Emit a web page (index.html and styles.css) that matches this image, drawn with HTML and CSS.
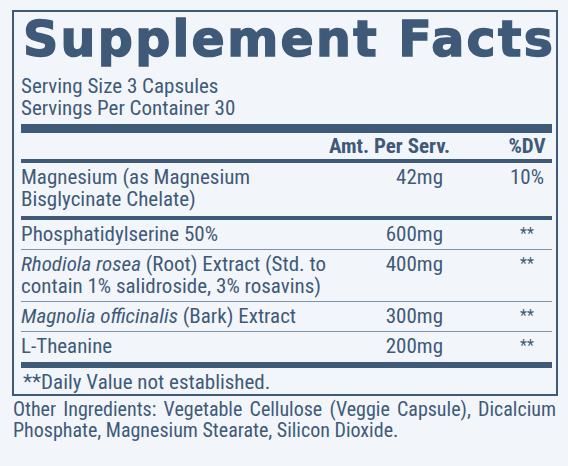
FILE: index.html
```html
<!DOCTYPE html>
<html>
<head>
    <title>Supplement Facts</title>
    <link rel="stylesheet" href="styles.css">
</head>
<body>
    <div class="label">
        <h1 class="title">Supplement Facts</h1>
        <div class="serving">
            <p>Serving Size 3 Capsules</p>
            <p>Servings Per Container 30</p>
        </div>
        <div class="bar-thick"></div>
        <div class="row head">
            <span class="name"></span>
            <span class="amt">Amt. Per Serv.</span>
            <span class="dv">%DV</span>
        </div>
        <div class="row first">
            <span class="name">Magnesium (as Magnesium<br>Bisglycinate Chelate)</span>
            <span class="amt">42mg</span>
            <span class="dv">10%</span>
        </div>
        <div class="row sep">
            <span class="name">Phosphatidylserine 50%</span>
            <span class="amt">600mg</span>
            <span class="dv star">**</span>
        </div>
        <div class="row">
            <span class="name"><i>Rhodiola rosea</i> (Root) Extract (Std. to<br>contain 1% salidroside, 3% rosavins)</span>
            <span class="amt">400mg</span>
            <span class="dv star">**</span>
        </div>
        <div class="row">
            <span class="name"><i>Magnolia officinalis</i> (Bark) Extract</span>
            <span class="amt">300mg</span>
            <span class="dv star">**</span>
        </div>
        <div class="row last">
            <span class="name">L-Theanine</span>
            <span class="amt">200mg</span>
            <span class="dv star">**</span>
        </div>
        <div class="bar-foot"></div>
        <p class="note">**Daily Value not established.</p>
    </div>
    <p class="other">Other Ingredients: Vegetable Cellulose (Veggie Capsule), Dicalcium Phosphate, Magnesium Stearate, Silicon Dioxide.</p>
</body>
</html>
```

FILE: styles.css
```css
body {
    margin: 0;
    padding: 0;
    background-color: #f2f6fa;
    color: #3f5a78;
    font-family: "Roboto Condensed", "Liberation Sans Narrow", "Liberation Sans", sans-serif;
    font-size: 21px;
}

p {
    margin: 0;
}

.label {
    margin: 10px 10px 0 12px;
    border: 2px solid #3f5a78;
    padding: 0 4px 0 7px;
}

.title {
    margin: 0 0 0 2px;
    font-family: "DejaVu Sans", "Liberation Sans", sans-serif;
    font-weight: bold;
    font-size: 49px;
    line-height: 56px;
    letter-spacing: 2.3px;
    -webkit-text-stroke: 1.5px #3f5a78;
    white-space: nowrap;
}

.serving {
    margin-top: 7px;
    line-height: 22px;
    padding-bottom: 5px;
}

.bar-thick {
    height: 9px;
    background-color: #3f5a78;
}

.row {
    display: grid;
    grid-template-columns: 1fr 80px 109px;
    line-height: 22px;
    padding: 3px 0 4px;
    border-top: 1px solid #7f93a8;
}

.row .amt {
    text-align: right;
}

.row .dv {
    padding-left: 59px;
    text-align: center;
}

.row.head {
    border-top: none;
    padding: 2px 0 2px;
    font-weight: bold;
}

.row.head .amt {
    white-space: nowrap;
    margin-left: -60px;
    margin-right: -7px;
}

.row.first {
    border-top: 4px solid #3f5a78;
    padding-bottom: 6px;
}

.row.sep {
    border-top: 4px solid #3f5a78;
}

.row.last {
    padding-bottom: 5px;
}

.star {
    font-size: 16px;
}

.bar-foot {
    height: 6px;
    background-color: #3f5a78;
}

.note {
    line-height: 22px;
    padding: 3px 0 1px 2px;
}

.other {
    margin: 3px 12px 0 13px;
    font-size: 20px;
    line-height: 21px;
    text-align: justify;
}
```
